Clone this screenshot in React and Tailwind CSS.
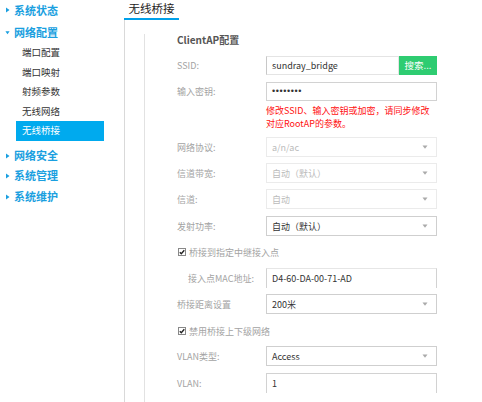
import React from "react";

const FONT = "font-['Noto_Sans_CJK_SC','Noto_Sans',sans-serif]";

function RightTri() {
  return (
    <svg width="5" height="6" viewBox="0 0 5 6" className="shrink-0">
      <path d="M1 0.5 L4.5 3 L1 5.5 Z" fill="#1a9fe0" />
    </svg>
  );
}

function DownTri() {
  return (
    <svg width="5" height="5" viewBox="0 0 6 5" className="shrink-0">
      <path d="M0.5 1 L5.5 1 L3 4.5 Z" fill="#1a9fe0" />
    </svg>
  );
}

function TopItem({ label, open, className = "" }) {
  return (
    <div className={`flex h-[20px] items-center gap-[4px] pl-[5px] ${className}`}>
      {open ? <DownTri /> : <RightTri />}
      <span className="text-[11px] font-semibold leading-none text-[#1a9fe0]">{label}</span>
    </div>
  );
}

function SubItem({ label, active }) {
  return (
    <div
      className={`flex h-[19.5px] w-[88px] items-center pl-[6px] text-[9.5px] leading-none ${
        active ? "bg-[#00aaee] text-white" : "text-[#333]"
      }`}
    >
      {label}
    </div>
  );
}

function Caret() {
  return (
    <svg width="6" height="5" viewBox="0 0 6 5" className="absolute right-[8px] top-1/2 -translate-y-1/2">
      <path d="M0.5 1 L5.5 1 L3 4.2 Z" fill="#aaa" />
    </svg>
  );
}

function Label({ children, indent }) {
  return (
    <div className={`w-[89px] shrink-0 text-[9px] leading-none text-[#a3a3a3] ${indent ? "pl-[11px]" : ""}`}>
      {children}
    </div>
  );
}

function Row({ label, indent, children, className = "", h = "h-[20px]" }) {
  return (
    <div className={`flex ${h} items-center ${className}`}>
      <Label indent={indent}>{label}</Label>
      {children}
    </div>
  );
}

function Select({ value, disabled }) {
  return (
    <div
      className={`relative flex h-full w-[171px] items-center border pl-[5px] text-[9px] leading-none ${
        disabled ? "border-[#ebebeb] text-[#bbb]" : "border-[#cfcfcf] text-[#333]"
      }`}
    >
      {value}
      <Caret />
    </div>
  );
}

function Input({ value, className = "" }) {
  return (
    <div
      className={`flex h-full w-[171px] items-center border border-[#d2d2d2] pl-[5px] text-[9px] leading-none text-[#333] ${className}`}
    >
      {value}
    </div>
  );
}

function Check({ label, className = "" }) {
  return (
    <div className={`flex h-[16px] items-center gap-[3px] pl-[1px] ${className}`}>
      <svg width="8" height="8" viewBox="0 0 8 8" className="shrink-0">
        <rect x="0.5" y="0.5" width="7" height="7" fill="#fff" stroke="#888" />
        <path d="M1.8 4.2 L3.3 5.7 L6.3 2.2" stroke="#222" strokeWidth="1.4" fill="none" />
      </svg>
      <span className="text-[9px] leading-none text-[#a3a3a3]">{label}</span>
    </div>
  );
}

export default function App() {
  return (
    <div className={`flex h-[402px] w-[482px] overflow-hidden bg-white ${FONT}`}>
      {/* Sidebar */}
      <div className="w-[124px] shrink-0">
        <TopItem label="系统状态" />
        <TopItem label="网络配置" open className="mt-[2px]" />
        <div className="ml-[16px] mt-[1px]">
          <SubItem label="端口配置" />
          <SubItem label="端口映射" />
          <SubItem label="射频参数" />
          <SubItem label="无线网络" />
          <SubItem label="无线桥接" active />
        </div>
        <TopItem label="网络安全" className="mt-[5px]" />
        <TopItem label="系统管理" />
        <TopItem label="系统维护" className="mt-[1px]" />
      </div>

      {/* Main */}
      <div className="flex flex-1 flex-col">
        <div className="flex h-[20px]">
          <div className="flex w-[55px] items-center justify-center border-b-2 border-[#00a0e9] pb-[1px] text-[11.5px] leading-none text-[#222]">
            无线桥接
          </div>
        </div>
        <div className="flex-1 border-l border-[#d9d9d9] pl-[19px]">
          <div className="mt-[14px] h-full border-l border-[#e2e2e2] pl-[32px]">
            <div className="h-[12px] text-[10px] font-bold leading-[12px] text-[#555]">ClientAP配置</div>

            <Row label="SSID:" className="mt-[10px]" h="h-[19px]">
              <div className="flex h-full w-[171px]">
                <div className="flex h-full flex-1 items-center border border-[#e4e4e4] border-l-[#c8c8c8] pl-[5px] text-[9px] leading-none text-[#333]">
                  sundray_bridge
                </div>
                <div className="flex h-full w-[38px] items-center justify-center bg-[#2ecc71] text-[9.5px] leading-none text-white">
                  搜索...
                </div>
              </div>
            </Row>

            <Row label="输入密钥:" className="mt-[7px]" h="h-[19px]">
              <Input
                value="••••••••"
                className="font-['Liberation_Sans',sans-serif] text-[9px] tracking-[0.6px]"
              />
            </Row>

            <div className="ml-[89px] mt-[3px] whitespace-nowrap text-[9px] leading-[13px] text-[#ff1010]">
              修改SSID、输入密钥或加密，请同步修改
              <br />
              对应RootAP的参数。
            </div>

            <Row label="网络协议:" className="mt-[7px]">
              <Select value="a/n/ac" disabled />
            </Row>
            <Row label="信道带宽:" className="mt-[6px]">
              <Select value="自动（默认）" disabled />
            </Row>
            <Row label="信道:" className="mt-[6px]">
              <Select value="自动" disabled />
            </Row>
            <Row label="发射功率:" className="mt-[7px]">
              <Select value="自动（默认）" />
            </Row>

            <Check label="桥接到指定中继接入点" className="mt-[8px]" />

            <Row label="接入点MAC地址:" indent className="mt-[8px]">
              <Input value="D4-60-DA-00-71-AD" className="border-b-0 border-t-[#e6e6e6]" />
            </Row>
            <Row label="桥接距离设置" className="mt-[6px]">
              <Select value="200米" />
            </Row>

            <Check label="禁用桥接上下级网络" className="mt-[9px]" />

            <Row label="VLAN类型:" className="mt-[7px]">
              <Select value="Access" />
            </Row>
            <Row label="VLAN:" className="mt-[7px]">
              <Input value="1" className="border-b-0" />
            </Row>
          </div>
        </div>
      </div>
    </div>
  );
}
